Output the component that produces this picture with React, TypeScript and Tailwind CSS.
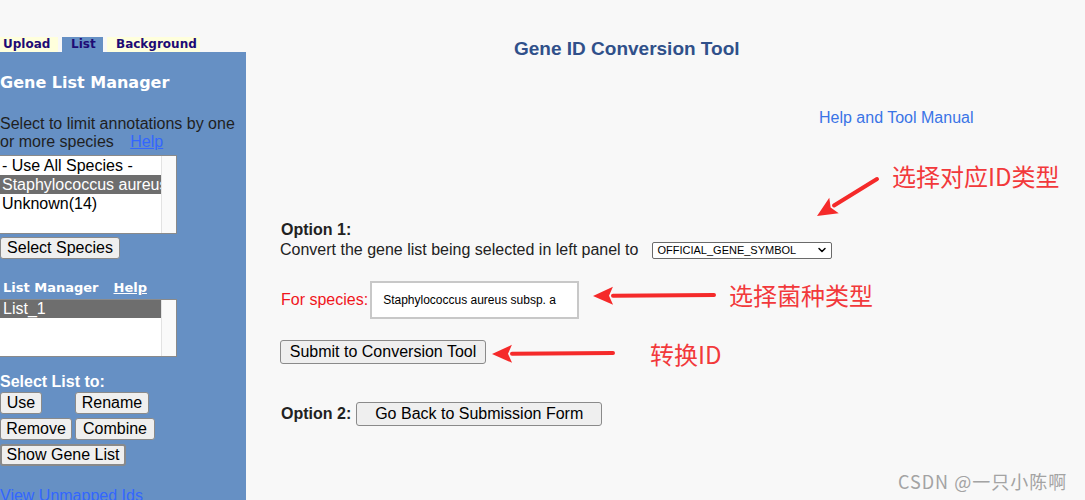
import { ChevronDown } from "lucide-react"

const sans = "font-['Liberation_Sans',Arial,sans-serif]"
const verdana = "font-['DejaVu_Sans',Verdana,sans-serif]"
const cjk = "font-['Noto_Sans_CJK_SC','Noto_Sans',sans-serif]"

const Btn = ({ children, className = "" }: { children: React.ReactNode; className?: string }) => (
    <button
        type="button"
        className={`h-[22px] px-[4px] whitespace-nowrap text-[16px] leading-none text-black bg-[#efefef] border border-[#8a8a8a] rounded-[3px] ${sans} ${className}`}
    >
        {children}
    </button>
)

// red annotation arrow, drawn from tail to tip
const Arrow = ({ x1, y1, x2, y2 }: { x1: number; y1: number; x2: number; y2: number }) => {
    const a = Math.atan2(y2 - y1, x2 - x1)
    const len = 20
    const half = 9
    const bx = x2 - Math.cos(a) * len
    const by = y2 - Math.sin(a) * len
    const px = -Math.sin(a) * half
    const py = Math.cos(a) * half
    return (
        <g>
            <line x1={x1} y1={y1} x2={bx} y2={by} stroke="#f52a2a" strokeWidth={4} strokeLinecap="round" />
            <polygon
                points={`${x2},${y2} ${bx + px},${by + py} ${bx + Math.cos(a) * 4},${by + Math.sin(a) * 4} ${bx - px},${by - py}`}
                fill="#f52a2a"
            />
        </g>
    )
}

const LeftPanel = () => (
    <div className="w-[246px] shrink-0 flex flex-col">
        <div className="h-[37px] shrink-0" />
        <div className={`shrink-0 flex h-[15px] gap-[4px] text-[12px] font-bold leading-[15px] text-[#1e0b75] ${verdana}`}>
            <div className="w-[58px] bg-[#ffffdc] pl-[3px]">Upload</div>
            <div className="w-[41px] bg-[#6690c4] pl-[9px]">List</div>
            <div className="w-[93px] bg-[#ffffdc] pl-[9px]">Background</div>
        </div>
        <div className="flex-1 min-h-0 overflow-hidden bg-[#6690c4] flex flex-col">
            <div className={`shrink-0 mt-[21px] text-[16px] font-bold leading-[19px] text-white ${verdana}`}>
                Gene List Manager
            </div>
            <div className={`shrink-0 mt-[23px] text-[16px] leading-[18px] text-[#1f1f1f] ${sans}`}>
                <div>Select to limit annotations by one</div>
                <div>
                    or more species <span className="ml-[12px] text-[#3366ff] underline">Help</span>
                </div>
            </div>
            <div className={`shrink-0 mt-[4px] -ml-px w-[178px] h-[79px] bg-white border border-[#8a8a8a] flex text-[16px] leading-[19px] text-black ${sans}`}>
                <div className="flex-1 overflow-hidden whitespace-nowrap">
                    <div className="h-[19px] pl-[2px]">- Use All Species -</div>
                    <div className="h-[19px] pl-[2px] bg-[#6e6e6e] text-white">Staphylococcus aureus</div>
                    <div className="h-[19px] pl-[2px]">Unknown(14)</div>
                </div>
                <div className="w-[15px] bg-[#fafafa] border-l border-[#e3e3e3]" />
            </div>
            <div className="shrink-0 mt-[1px]">
                <Btn className="w-[120px]">Select Species</Btn>
            </div>
            <div className={`shrink-0 mt-[21px] pl-[3px] flex gap-[15px] text-[13px] font-bold leading-[16px] text-white ${verdana}`}>
                <span>List Manager</span>
                <span className="underline">Help</span>
            </div>
            <div className={`shrink-0 mt-[3px] -ml-px w-[178px] h-[58px] bg-white border border-[#8a8a8a] flex text-[16px] leading-[18px] text-black ${sans}`}>
                <div className="flex-1">
                    <div className="h-[18px] pl-[3px] bg-[#6e6e6e] text-white">List_1</div>
                </div>
                <div className="w-[15px] bg-[#fafafa] border-l border-[#e3e3e3]" />
            </div>
            <div className={`shrink-0 mt-[16px] text-[16px] font-bold leading-[18px] text-white ${sans}`}>Select List to:</div>
            <div className="shrink-0 mt-[1px] grid grid-cols-[72px_auto] gap-x-[3px] gap-y-[4px] justify-start items-start">
                <Btn className="w-[42px]">Use</Btn>
                <Btn className="w-[74px]">Rename</Btn>
                <Btn className="w-[72px]">Remove</Btn>
                <Btn className="w-[80px]">Combine</Btn>
                <Btn className="w-[126px] border-2 border-[#1a1a1a] col-span-2">Show Gene List</Btn>
            </div>
            <div className={`shrink-0 mt-[21px] text-[16px] leading-[18px] text-[#3366ff] underline ${sans}`}>View Unmapped Ids</div>
        </div>
    </div>
)

export default function App() {
    return (
        <div className="relative w-[1085px] h-[500px] overflow-hidden bg-[#f8f8f8] flex">
            <LeftPanel />
            <div className={`flex-1 flex flex-col text-[16px] leading-[18px] text-[#222] ${sans}`}>
                <div className="mt-[37px] pl-[268px] text-[19px] leading-[23px] font-bold text-[#30508a]">
                    Gene ID Conversion Tool
                </div>
                <div className="mt-[49px] pl-[573px] text-[#3a74e6]">Help and Tool Manual</div>
                <div className="mt-[94px] pl-[35px] font-bold">Option 1:</div>
                <div className="mt-[2px] pl-[34px] flex items-center h-[18px]">
                    <span>Convert the gene list being selected in left panel to</span>
                    <div className="ml-[14px] w-[180px] h-[17px] bg-white border border-[#6a6a6a] rounded-[2px] flex items-center justify-between pl-[4px] pr-[3px]">
                        <span className="text-[11px] leading-none text-black">OFFICIAL_GENE_SYMBOL</span>
                        <ChevronDown size={12} strokeWidth={3} className="text-black" />
                    </div>
                </div>
                <div className="mt-[22px] pl-[35px] flex items-center">
                    <span className="text-[#f0161c]">For species:</span>
                    <div className="ml-[2px] w-[209px] h-[38px] bg-white border-2 border-[#c8c8c8] flex items-center pl-[11px] text-[12px] text-black">
                        Staphylococcus aureus subsp. a
                    </div>
                </div>
                <div className="mt-[21px] pl-[34px]">
                    <Btn className="h-[24px] w-[206px]">Submit to Conversion Tool</Btn>
                </div>
                <div className="mt-[38px] pl-[35px] flex items-center gap-[5px]">
                    <span className="font-bold">Option 2:</span>
                    <Btn className="h-[24px] w-[246px]">Go Back to Submission Form</Btn>
                </div>
            </div>

            {/* annotations over the screenshot */}
            <svg className="absolute inset-0 pointer-events-none" width={1085} height={500}>
                <Arrow x1={877} y1={179} x2={817} y2={216} />
                <Arrow x1={714} y1={295} x2={593} y2={296} />
                <Arrow x1={613} y1={353} x2={492} y2={354} />
            </svg>
            <div className={`absolute left-[892px] top-[160px] text-[24px] leading-[32px] text-[#f2393b] ${cjk}`}>选择对应ID类型</div>
            <div className={`absolute left-[729px] top-[279px] text-[24px] leading-[32px] text-[#f2393b] ${cjk}`}>选择菌种类型</div>
            <div className={`absolute left-[650px] top-[338px] text-[24px] leading-[32px] text-[#f2393b] ${cjk}`}>转换ID</div>
            <div className={`absolute left-[898px] top-[469px] text-[18px] leading-[24px] tracking-[1px] text-[#a3a3a3] ${cjk}`}>CSDN @一只小陈啊</div>
        </div>
    )
}
